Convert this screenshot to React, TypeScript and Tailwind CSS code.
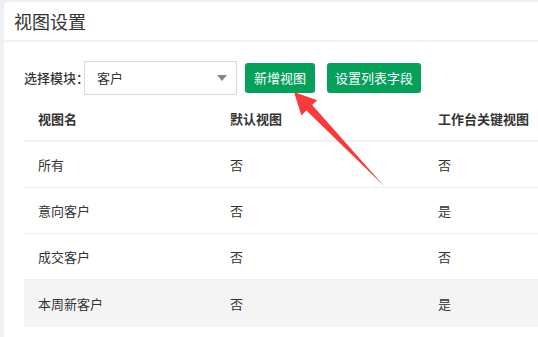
import React from "react";

const rows = [
  ["所有", "否", "否"],
  ["意向客户", "否", "是"],
  ["成交客户", "否", "否"],
  ["本周新客户", "否", "是"],
];

export default function App() {
  return (
    <div
      className="w-[538px] h-[337px] overflow-hidden bg-[#edf0f5] pl-[4px] pt-[2px] relative"
      style={{ fontFamily: '"Noto Sans CJK SC", "Noto Sans", sans-serif' }}
    >
      <div className="bg-white rounded-tl-[4px] h-full w-[600px]">
        <div className="h-[40px] flex items-center pl-[10px] text-[18px] text-[#333] border-b-[2px] border-[#f0f1f4] leading-none">
          视图设置
        </div>
        <div className="pl-[20px] pt-[19px] flex items-center">
          <span className="text-[13px] text-[#333] font-medium w-[60px] shrink-0 whitespace-nowrap">选择模块：</span>
          <div className="w-[153px] h-[34px] shrink-0 border border-[#d5d8de] flex items-center justify-between pl-[12px] pr-[9px] text-[13px] text-[#333]">
            <span>客户</span>
            <span className="w-0 h-0 border-l-[5px] border-r-[5px] border-t-[6px] border-l-transparent border-r-transparent border-t-[#888]" />
          </div>
          <button className="ml-[8px] h-[30px] w-[70px] shrink-0 rounded-[3px] bg-[#05a15b] text-white text-[13px] flex items-center justify-center">
            新增视图
          </button>
          <button className="ml-[12px] h-[30px] w-[94px] shrink-0 rounded-[3px] bg-[#05a15b] text-white text-[13px] flex items-center justify-center">
            设置列表字段
          </button>
        </div>
        <div className="ml-[20px] mt-[3px] text-[13px] text-[#333]">
          <div className="flex h-[44px] items-center border-b-[2px] border-[#f1f1f1] font-bold">
            <div className="w-[206px] pl-[14px]">视图名</div>
            <div className="w-[208px]">默认视图</div>
            <div>工作台关键视图</div>
          </div>
          {rows.map((r, i) => (
            <div
              key={i}
              className={
                "flex items-center " +
                (i === 3 ? "h-[47px] bg-[#f4f4f4]" : "h-[46px] border-b border-[#f0f0f0]")
              }
            >
              <div className="w-[206px] pl-[14px]">{r[0]}</div>
              <div className="w-[208px]">{r[1]}</div>
              <div>{r[2]}</div>
            </div>
          ))}
        </div>
      </div>
      <svg className="absolute left-0 top-0 pointer-events-none" width="538" height="337">
        <polygon
          points="294,92 317.2,100.2 312.2,105 384,186 306.4,110.6 301.4,115.4"
          fill="#f53b3b"
        />
      </svg>
    </div>
  );
}
